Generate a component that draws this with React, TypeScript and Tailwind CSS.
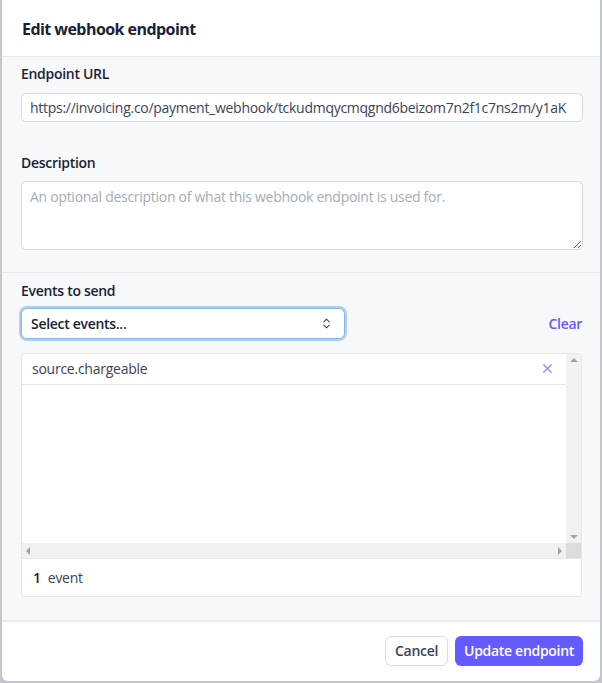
import { ChevronsUpDown, X } from "lucide-react";

const font = { fontFamily: '"Open Sans", "Noto Sans", sans-serif' };

function Label({ children }: { children: React.ReactNode }) {
  return <div className="text-[14px] font-semibold leading-5 tracking-[-0.3px] text-[#1a1f36]">{children}</div>;
}

function EventList() {
  return (
    <div className="mt-[14px] overflow-hidden rounded-[4px] border border-[#e3e8ee] bg-white">
      <div className="flex h-[189px]">
        <div className="flex-1">
          <div className="flex h-[31px] items-center justify-between border-b border-[#e3e8ee] pl-[10px] pr-[11px] pb-[1px]">
            <span className="text-[14px] tracking-[-0.25px] text-[#3c4257]">source.chargeable</span>
            <X className="h-[15px] w-[15px] text-[#8c86f6]" strokeWidth={2} />
          </div>
        </div>
        {/* vertical scrollbar */}
        <div className="flex w-[15px] flex-col items-center justify-between bg-[#f1f1f1] py-[4px]">
          <div className="h-0 w-0 border-x-[4px] border-b-[4px] border-x-transparent border-b-[#a3a3a3]" />
          <div className="h-0 w-0 border-x-[4px] border-t-[4px] border-x-transparent border-t-[#a3a3a3]" />
        </div>
      </div>
      {/* horizontal scrollbar */}
      <div className="flex h-[15px]">
        <div className="flex flex-1 items-center justify-between bg-[#f1f1f1] px-[4px]">
          <div className="h-0 w-0 border-y-[4px] border-r-[4px] border-y-transparent border-r-[#a3a3a3]" />
          <div className="h-0 w-0 border-y-[4px] border-l-[4px] border-y-transparent border-l-[#a3a3a3]" />
        </div>
        <div className="w-[15px] bg-[#dcdcdc]" />
      </div>
      <div className="flex h-[38px] items-center gap-[7px] border-t border-[#e3e8ee] px-[11px] text-[14px] tracking-[-0.25px]">
        <span className="font-semibold text-[#1a1f36]">1</span>
        <span className="text-[#3c4257]">event</span>
      </div>
    </div>
  );
}

export default function App() {
  return (
    <div className="h-[683px] w-[602px] bg-[#c3c7cc] pl-[2px] pr-[2px]" style={font}>
      <div className="flex h-[681px] flex-col overflow-hidden rounded-b-[6px] bg-white">
        {/* Header */}
        <div className="flex h-[57px] shrink-0 items-center border-b border-[#e3e8ee] px-[20px] pt-[1px]">
          <h1 className="text-[16px] font-bold tracking-[-0.55px] text-[#1a1f36]">Edit webhook endpoint</h1>
        </div>

        {/* Body */}
        <div className="flex-1 bg-[#f7f8fa]">
          <div className="pl-[19px] pr-[17px] pt-[7px]">
            <Label>Endpoint URL</Label>
            <input
              readOnly
              value="https://invoicing.co/payment_webhook/tckudmqycmqgnd6beizom7n2f1c7ns2m/y1aK"
              className="mt-[9px] h-[29px] w-full rounded-[5px] border border-[#d5dbe1] bg-white px-[8px] text-[14px] tracking-[-0.28px] text-[#3c4257] outline-none"
              style={font}
            />
            <div className="mt-[31px]">
              <Label>Description</Label>
            </div>
            <textarea
              readOnly
              placeholder="An optional description of what this webhook endpoint is used for."
              className="mt-[8px] block h-[69px] w-full resize-y rounded-[5px] border border-[#d5dbe1] bg-white px-[8px] py-[4px] text-[14px] tracking-[-0.28px] text-[#3c4257] outline-none placeholder:text-[#a3acb9]"
              style={font}
            />
          </div>

          <div className="mt-[22px] border-t border-[#e3e8ee] pl-[19px] pr-[18px] pt-[8px]">
            <Label>Events to send</Label>
            <div className="mt-[7px] flex items-center justify-between">
              <div className="flex h-[31px] w-[324px] items-center justify-between rounded-[6px] border border-[#8cb8e6] bg-white pl-[9px] pr-[11px] shadow-[0_0_0_2px_#a9d0f2]">
                <span className="text-[14px] font-semibold tracking-[-0.3px] text-[#1a1f36]">Select events...</span>
                <ChevronsUpDown className="h-[13px] w-[13px] text-[#3c4257]" strokeWidth={2} />
              </div>
              <span className="text-[14px] font-semibold tracking-[-0.3px] text-[#635bff]">Clear</span>
            </div>
            <EventList />
          </div>
        </div>

        {/* Footer */}
        <div className="flex h-[61px] shrink-0 items-center justify-end gap-[7px] border-t-2 border-[#ebeef1] px-[17px] pb-[2px]">
          <button className="h-[30px] rounded-[6px] border border-[#d5dbe1] bg-white px-[9px] text-[14px] font-semibold tracking-[-0.3px] text-[#3c4257]">
            Cancel
          </button>
          <button className="h-[30px] rounded-[6px] bg-[#635bff] px-[9px] text-[14px] font-semibold tracking-[-0.3px] text-white">
            Update endpoint
          </button>
        </div>
      </div>
    </div>
  );
}
